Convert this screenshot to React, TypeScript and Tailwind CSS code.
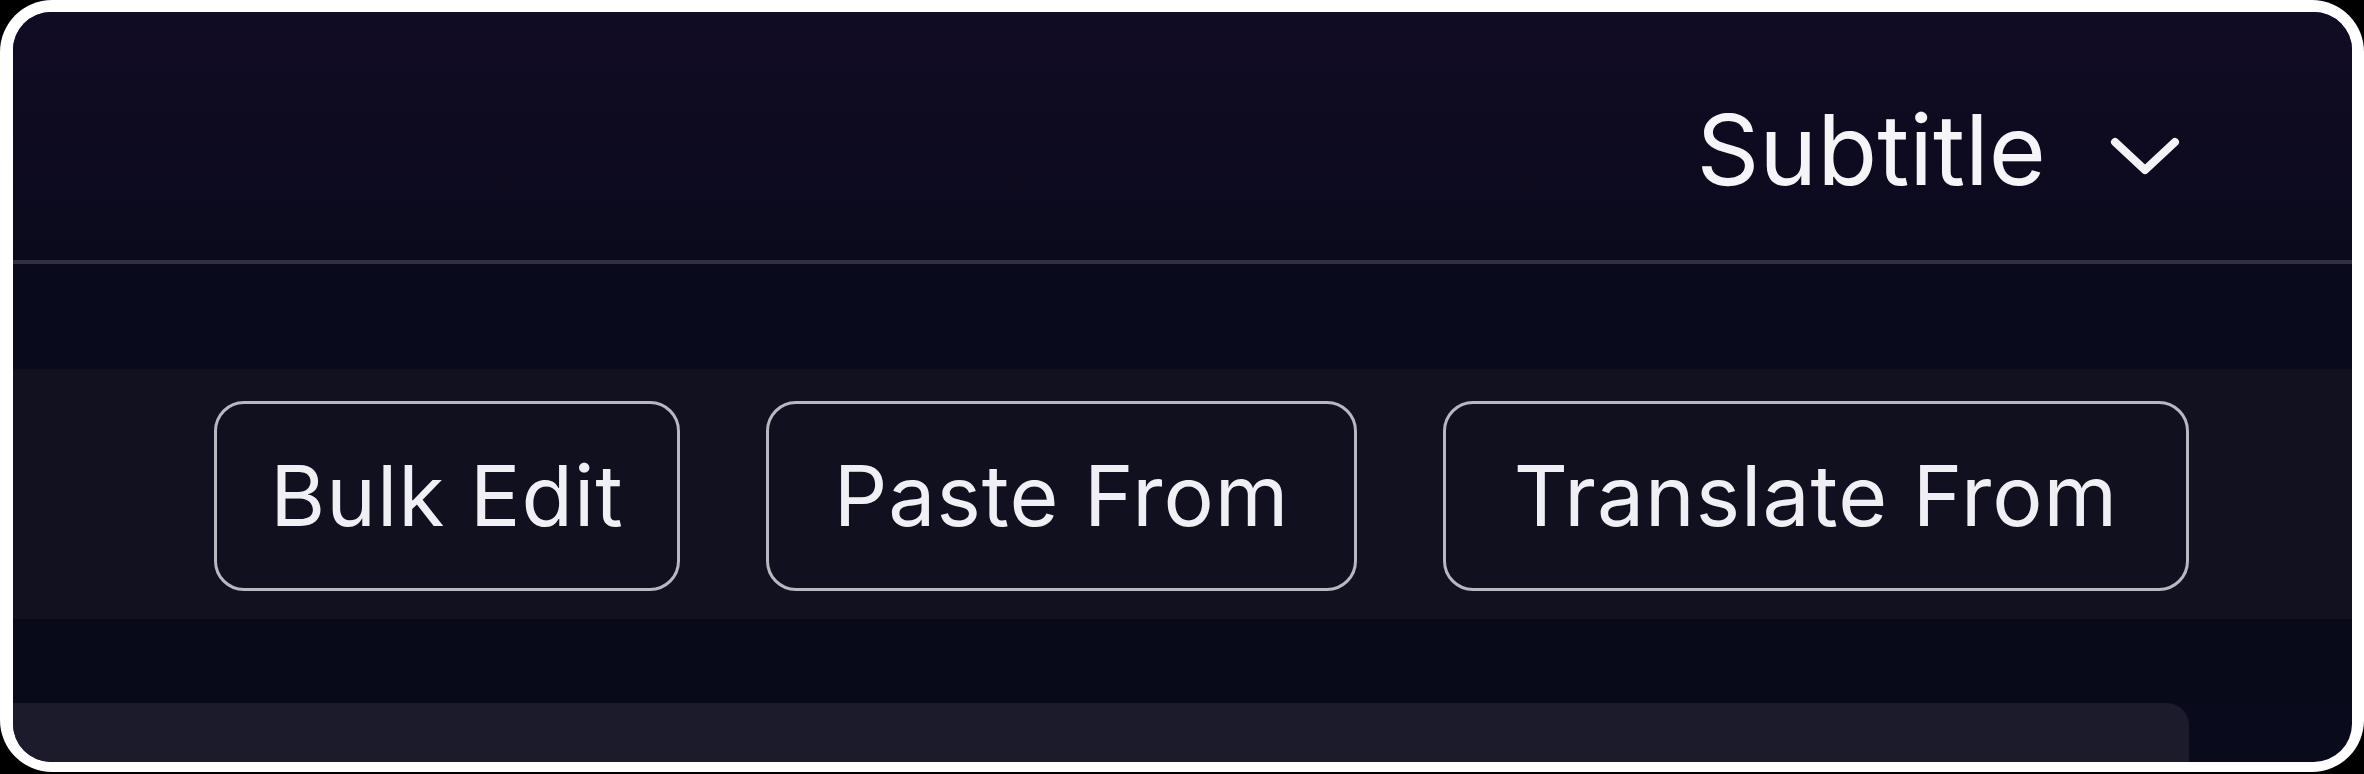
import { useState } from 'react';

const font = { fontFamily: 'Inter, "Noto Sans", sans-serif' };

function Chevron() {
  return (
    <svg width="70" height="40" viewBox="0 0 70 40" fill="none" className="shrink-0 mt-[12px]">
      <polyline points="5,6 35,34 65,6" stroke="#f3f3f5" strokeWidth="8" strokeLinecap="round" strokeLinejoin="round" />
    </svg>
  );
}

export default function App() {
  const [mode] = useState('Subtitle');
  const actions = [
    { label: 'Bulk Edit', w: 'w-[466px]' },
    { label: 'Paste From', w: 'w-[591px]' },
    { label: 'Translate From', w: 'w-[746px]' },
  ];

  return (
    <div className="w-[2364px] h-[774px] bg-black" style={font}>
      <div className="h-[772px] bg-white rounded-[52px] pt-[12px] pb-[10px] pl-[13px] pr-[12px]">
        <div className="h-full rounded-[38px] overflow-hidden flex flex-col bg-[#090a1c]">
          <header className="h-[248px] shrink-0 flex items-center justify-end gap-[64px] pr-[172px] pt-[28px] bg-gradient-to-b from-[#110c24] to-[#0b0a1c]">
            <span className="text-[98px] leading-none text-[#f5f5f7] font-normal">{mode}</span>
            <Chevron />
          </header>
          <div className="h-[4px] shrink-0 bg-[#302f44]" />
          <div className="h-[105px] shrink-0 bg-[#090a1c]" />
          <div className="h-[250px] shrink-0 bg-[#11111f] flex justify-end items-start gap-[86px] pr-[163px] pt-[32px]">
            {actions.map(a => (
              <button
                key={a.label}
                className={`${a.w} h-[190px] rounded-[30px] border-[3px] border-[#b8b8c0] bg-[#10101f] text-[84px] leading-none tracking-[1px] text-[#f0f0f4] flex items-center justify-center`}
              >
                {a.label}
              </button>
            ))}
          </div>
          <div className="h-[84px] shrink-0 bg-[#080a1a]" />
          <div className="flex-1 mr-[163px] rounded-tr-[22px] bg-[#1c1b2b]" />
        </div>
      </div>
    </div>
  );
}
